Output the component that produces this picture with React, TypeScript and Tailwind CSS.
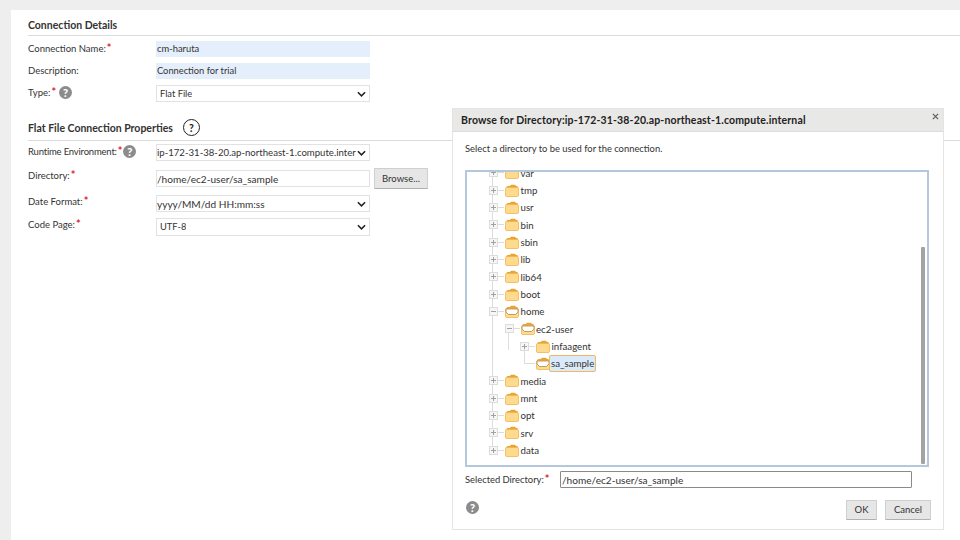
import React from "react";

const Star = () => <span className="text-[#d9272e] font-bold text-[11px] leading-[10px] relative top-[-1px] ml-[1px]">*</span>;

const Help = ({ size = "w-[13px] h-[13px] text-[11px]" }: { size?: string }) => (
  <span className={`inline-flex items-center justify-center rounded-full bg-[#8c8c8c] text-white font-black leading-none ${size}`}>?</span>
);

const Chevron = () => (
  <svg viewBox="0 0 10 6" className="absolute right-[3px] top-1/2 -mt-[3px] w-[9px] h-[6px] pointer-events-none">
    <path d="M1 1l4 4 4-4" fill="none" stroke="#222" strokeWidth="1.7" />
  </svg>
);

const Select = ({ value, h, pl, cls }: { value: string; h: string; pl: string; cls: string }) => (
  <div className={`relative w-[214px] ${h} ${pl} border border-[#e2e2e2] bg-white flex items-center pr-[13px] overflow-hidden whitespace-nowrap text-[#333] ${cls}`}>
    <span className="overflow-hidden">{value}</span>
    <Chevron />
  </div>
);

const Text = ({ value, tint, h, cls }: { value: string; tint?: boolean; h: string; cls: string }) => (
  <div className={`w-[214px] ${h} ${cls} border flex items-center text-[#333] whitespace-nowrap ${tint ? "bg-[#e5eefb] border-[#e5eefb]" : "bg-white border-[#e2e2e2]"}`}>
    {value}
  </div>
);

const Btn = ({ children, w, h }: { children: React.ReactNode; w: string; h: string }) => (
  <div className={`${w} ${h} flex items-center justify-center bg-[#e6e6e6] border border-[#cfcfcf] border-b-[#b0b0b0] rounded-[1px] text-[#333] text-[9.500px]`}>{children}</div>
);

const Folder = ({ open }: { open?: boolean }) => (
  <svg viewBox="0 0 14 13" className="w-[14px] h-[13px] shrink-0">
    <path d="M1 4C1 2.400 2.500 2 3.500 2H5C5.500 1 6 0.800 7 0.800h2c1 0 1.500.4 2 1.200h.5c1 0 1.500.6 1.500 2v1H1z" fill="#eba332" />
    <rect x="0.500" y="3.500" width="13" height="9" rx="1.300" fill="#fdda8d" stroke="#efb552" strokeWidth="0.800" />
    {open && <path d="M1 4h12v3L10.500 9.500h-7L1 7z" fill="#fff" stroke="#a9884e" strokeWidth="0.800" />}
  </svg>
);

const Expander = ({ minus }: { minus?: boolean }) => (
  <div className="relative w-[9px] h-[9px] shrink-0 border border-[#dcdcdc] bg-[#f6f6f6]">
    <div className="absolute left-[1px] right-[1px] top-[3px] h-px bg-[#a0a0a0]" />
    {!minus && <div className="absolute top-[1px] bottom-[1px] left-[3px] w-px bg-[#a0a0a0]" />}
  </div>
);

type Row = { name: string; level: 0 | 1 | 2; kind: "plus" | "minus" | "none"; open?: boolean; selected?: boolean };

const rows: Row[] = [
  { name: "var", level: 0, kind: "plus" },
  { name: "tmp", level: 0, kind: "plus" },
  { name: "usr", level: 0, kind: "plus" },
  { name: "bin", level: 0, kind: "plus" },
  { name: "sbin", level: 0, kind: "plus" },
  { name: "lib", level: 0, kind: "plus" },
  { name: "lib64", level: 0, kind: "plus" },
  { name: "boot", level: 0, kind: "plus" },
  { name: "home", level: 0, kind: "minus", open: true },
  { name: "ec2-user", level: 1, kind: "minus", open: true },
  { name: "infaagent", level: 2, kind: "plus" },
  { name: "sa_sample", level: 2, kind: "none", open: true, selected: true },
  { name: "media", level: 0, kind: "plus" },
  { name: "mnt", level: 0, kind: "plus" },
  { name: "opt", level: 0, kind: "plus" },
  { name: "srv", level: 0, kind: "plus" },
  { name: "data", level: 0, kind: "plus" },
];

const indent = { 0: "pl-[22px]", 1: "pl-[37.500px]", 2: "pl-[53px]" };

const TreeRow = ({ r }: { r: Row }) => (
  <div className={`relative h-[17.350px] flex items-center ${indent[r.level]}`}>
    {r.kind === "none" ? (
      <div className="w-[9px] h-[9px] shrink-0 relative">
        <div className="absolute left-[4px] top-[-10px] h-[14px] w-px bg-[#dcdcdc]" />
        <div className="absolute left-[4px] top-[4px] w-[7px] h-px bg-[#dcdcdc]" />
      </div>
    ) : (
      <Expander minus={r.kind === "minus"} />
    )}
    <div className="w-[6px] h-px bg-[#dcdcdc] shrink-0 mr-[1px]" />
    <Folder open={r.open} />
    {r.selected ? (
      <span className="-ml-[1px] px-[1px] h-[17px] flex items-center bg-[#dbeafa] border border-[#f0b860] rounded-[2px] text-[#333]">{r.name}</span>
    ) : (
      <span className="ml-[1.500px] text-[#333]">{r.name}</span>
    )}
  </div>
);

const Label = ({ children, cls }: { children: React.ReactNode; cls: string }) => (
  <div className={`w-[128px] shrink-0 flex items-center text-[#333] text-[9.500px] whitespace-nowrap ${cls}`}>{children}</div>
);

const Row2 = ({ cls, children }: { cls: string; children: React.ReactNode }) => <div className={`flex items-start ${cls}`}>{children}</div>;

export default function App() {
  return (
    <div className="relative w-[960px] h-[540px] overflow-hidden bg-[#eeeeee] pl-[11px] pt-[10px] text-[9.700px] leading-[14px]" style={{ fontFamily: '"Lato", "Noto Sans", sans-serif' }}>
      <div className="h-[530px] bg-white pl-[17px]">
        <div className="h-[26px] border-b border-[#dcdcdc] flex items-center pt-[4px] font-bold text-[#333] text-[10.500px]">Connection Details</div>
        <Row2 cls="mt-[5px]">
          <Label cls="pt-[1px]">
            <span>Connection Name:</span><Star />
          </Label>
          <Text value="cm-haruta" tint h="h-[16px]" cls="text-[9.400px]" />
        </Row2>
        <Row2 cls="mt-[6px]">
          <Label cls="pt-[1px]">Description:</Label>
          <Text value="Connection for trial" tint h="h-[16px]" cls="text-[9.300px]" />
        </Row2>
        <Row2 cls="mt-[6px]">
          <Label cls="">
            <span className="pt-[1px]">Type:</span><Star />
            <span className="ml-[3px] flex"><Help /></span>
          </Label>
          <Select value="Flat File" h="h-[17px]" pl="pl-[3px]" cls="text-[9.300px]" />
        </Row2>
        <div className="h-[39px] border-b border-[#dcdcdc] flex items-end font-bold text-[10.500px] text-[#333]">
          <div className="flex items-center gap-[10px] pb-[4px]">
            <span>Flat File Connection Properties</span>
            <span className="w-[17px] h-[17px] rounded-full border-[1.500px] border-[#222] flex items-center justify-center text-[10.500px] font-bold text-[#222]">?</span>
          </div>
        </div>
        <Row2 cls="mt-[3px]">
          <Label cls="tracking-[-0.2px]">
            <span className="pt-[1px]">Runtime Environment:</span><Star />
            <span className="ml-[1px] flex"><Help /></span>
          </Label>
          <Select value="ip-172-31-38-20.ap-northeast-1.compute.internal" h="h-[17px]" pl="pl-0" cls="text-[9.600px]" />
        </Row2>
        <Row2 cls="mt-[7px]">
          <Label cls="pt-[1px]">
            <span>Directory:</span><Star />
          </Label>
          <div className="mt-[2px]">
            <Text value="/home/ec2-user/sa_sample" h="h-[17px]" cls="text-[10.100px]" />
          </div>
          <div className="ml-[4px]">
            <Btn w="w-[54px]" h="h-[21px]">Browse...</Btn>
          </div>
        </Row2>
        <Row2 cls="mt-[6px]">
          <Label cls="">
            <span>Date Format:</span><Star />
          </Label>
          <Select value="yyyy/MM/dd HH:mm:ss" h="h-[17px]" pl="pl-[0px]" cls="text-[10.100px]" />
        </Row2>
        <Row2 cls="mt-[6px]">
          <Label cls="">
            <span>Code Page:</span><Star />
          </Label>
          <Select value="UTF-8" h="h-[18px]" pl="pl-[3px]" cls="text-[9.300px]" />
        </Row2>
      </div>

      {/* dialog */}
      <div className="absolute left-[452px] top-[108px] w-[492px] h-[422px] bg-white border border-[#e4e4e4] flex flex-col">
        <div className="relative h-[23px] shrink-0 bg-[#e8e8e6] border-b border-[#dddddd] flex items-center pl-[8px] pb-[1px] font-bold text-[#222] text-[10.500px] whitespace-nowrap tracking-[0.150px]">
          Browse for Directory:ip-172-31-38-20.ap-northeast-1.compute.internal
          <svg viewBox="0 0 8 8" className="absolute right-[4px] top-[4px] w-[7px] h-[7px]">
            <path d="M1 1l6 6M7 1L1 7" stroke="#555" strokeWidth="1.200" />
          </svg>
        </div>
        <div className="pl-[12px] pt-[10px] text-[#333] text-[9.400px]">Select a directory to be used for the connection.</div>
        <div className="relative ml-[12px] mt-[14px] w-[464px] h-[297px] border-2 border-[#b3c7dd] overflow-hidden">
          <div className="absolute left-[25px] top-0 h-[280px] w-px bg-[#dcdcdc]" />
          <div className="absolute left-[41px] top-[156px] h-[22px] w-px bg-[#e0e0e0]" />
          <div className="relative -mt-[8px]">
            {rows.map((r) => (
              <TreeRow key={r.name} r={r} />
            ))}
          </div>
          <div className="absolute right-[2px] top-[75px] w-[4px] h-[217px] rounded-[1px] bg-[#a3a3a3]" />
        </div>
        <div className="flex items-center pl-[12px] mt-[4px]">
          <div className="w-[95px] shrink-0 flex items-center text-[#333] whitespace-nowrap text-[9.400px]"><span>Selected Directory:</span><Star /></div>
          <div className="w-[352px] h-[17px] border border-[#8a8a8a] rounded-[1px] pl-[1px] flex items-center text-[#333] text-[10.100px]">/home/ec2-user/sa_sample</div>
        </div>
        <div className="flex items-start justify-between pl-[13px] pr-[12px] mt-[12px]">
          <span className="mt-[1px] flex"><Help /></span>
          <div className="flex gap-[8px]">
            <Btn w="w-[31px]" h="h-[20px]">OK</Btn>
            <Btn w="w-[46px]" h="h-[20px]">Cancel</Btn>
          </div>
        </div>
      </div>
    </div>
  );
}
